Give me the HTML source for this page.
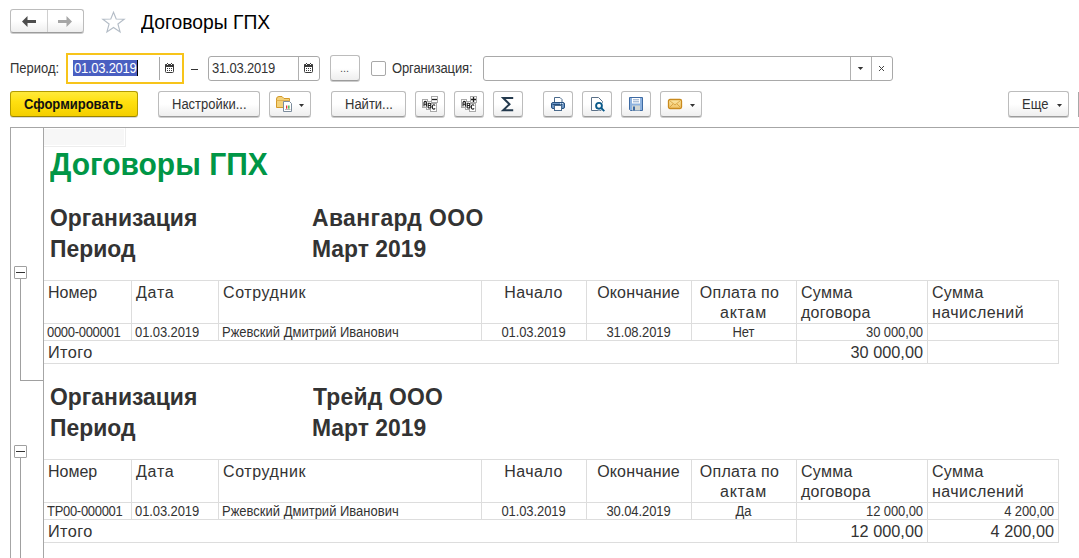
<!DOCTYPE html>
<html><head><meta charset="utf-8">
<style>
*{margin:0;padding:0;box-sizing:border-box}
html,body{width:1079px;height:558px;overflow:hidden;background:#fff;font-family:"Liberation Sans",sans-serif;color:#333}
.a{position:absolute}
.btn{position:absolute;border:1px solid #bcbcbc;border-bottom-color:#9c9c9c;border-radius:3px;background:linear-gradient(#fff 0%,#fff 50%,#eeeeee 100%);box-shadow:0 1px 0 rgba(0,0,0,.2)}
.t{position:absolute;white-space:nowrap;line-height:1}
.fld{position:absolute;border:1px solid #a9a9a9;border-radius:3px;background:#fff}
.f13{font-size:13px;color:#333;transform:scaleY(1.1);transform-origin:0 84.65%}
.rb{font-weight:bold;font-size:22.9px;color:#333;transform:scaleY(1.08);transform-origin:0 0}
.hd{font-size:16px;color:#333}
.tt{font-size:16.3px;color:#333}
.dt{font-size:13px;color:#333;transform:scaleY(1.1);transform-origin:0 84.65%}
</style></head><body>
<div class="btn" style="left:10px;top:9px;width:74px;height:24px;"></div>
<div class="a" style="left:47px;top:10px;width:1px;height:22px;background:#cfcfcf"></div>
<svg class="a" style="left:21px;top:15px" width="16" height="13" viewBox="0 0 16 13"><path d="M1 6.5 L6.5 1 L6.5 5 L15 5 L15 8 L6.5 8 L6.5 12 Z" fill="#4d4d4d"/></svg>
<svg class="a" style="left:57px;top:15px" width="16" height="13" viewBox="0 0 16 13"><path d="M15 6.5 L9.5 1 L9.5 5 L1 5 L1 8 L9.5 8 L9.5 12 Z" fill="#a6a6a6"/></svg>
<svg class="a" style="left:100px;top:9px" width="27" height="25" viewBox="0 0 27 25"><path d="M13.5 3.2 L16.2 10 L24.2 10.2 L17.9 15 L20.1 23 L13.5 18.5 L6.9 23 L9.1 15 L2.8 10.2 L10.8 10 Z" fill="none" stroke="#b3bcc6" stroke-width="1.1" stroke-linejoin="miter"/></svg>
<div class="t " style="left:141px;top:11.5px;font-size:19.3px;color:#000;transform:scaleY(1.05);transform-origin:0 0">Договоры ГПХ</div>
<div class="t f13" style="left:10px;top:62px;">Период:</div>
<div class="a" style="left:66px;top:53px;width:118px;height:31px;border:2px solid #f7c41a"></div>
<div class="a" style="left:159px;top:57px;width:1px;height:23px;background:#a8a8a8"></div>
<div class="a" style="left:73px;top:60px;width:64px;height:16px;background:#4a5fc1"></div>
<div class="a" style="left:137px;top:60px;width:1px;height:16px;background:#000"></div>
<div class="t f13" style="left:74px;top:62px;color:#fff;letter-spacing:-0.25px">01.03.2019</div>
<svg class="a" style="left:165px;top:63px" width="9" height="10" viewBox="0 0 9 10"><rect x="0.5" y="1.5" width="8" height="8" rx="1" fill="#fff" stroke="#3a3a3a"/><rect x="0" y="1" width="9" height="3" rx="1" fill="#3a3a3a"/><rect x="2" y="0" width="1" height="1" fill="#3a3a3a"/><rect x="6" y="0" width="1" height="1" fill="#3a3a3a"/><rect x="2" y="1" width="1" height="1" fill="#fff"/><rect x="6" y="1" width="1" height="1" fill="#fff"/><g fill="#3a3a3a"><rect x="2" y="5" width="1" height="1"/><rect x="4" y="5" width="1" height="1"/><rect x="6" y="5" width="1" height="1"/><rect x="2" y="7" width="1" height="1"/><rect x="4" y="7" width="1" height="1"/><rect x="6" y="7" width="1" height="1"/></g></svg>
<div class="a" style="left:191px;top:69px;width:7px;height:1px;background:#333"></div>
<div class="fld" style="left:208px;top:56px;width:112px;height:25px"></div>
<div class="a" style="left:298px;top:57px;width:1px;height:23px;background:#b0b0b0"></div>
<div class="t f13" style="left:212px;top:62px;letter-spacing:-0.2px">31.03.2019</div>
<svg class="a" style="left:304px;top:63px" width="9" height="10" viewBox="0 0 9 10"><rect x="0.5" y="1.5" width="8" height="8" rx="1" fill="#fff" stroke="#3a3a3a"/><rect x="0" y="1" width="9" height="3" rx="1" fill="#3a3a3a"/><rect x="2" y="0" width="1" height="1" fill="#3a3a3a"/><rect x="6" y="0" width="1" height="1" fill="#3a3a3a"/><rect x="2" y="1" width="1" height="1" fill="#fff"/><rect x="6" y="1" width="1" height="1" fill="#fff"/><g fill="#3a3a3a"><rect x="2" y="5" width="1" height="1"/><rect x="4" y="5" width="1" height="1"/><rect x="6" y="5" width="1" height="1"/><rect x="2" y="7" width="1" height="1"/><rect x="4" y="7" width="1" height="1"/><rect x="6" y="7" width="1" height="1"/></g></svg>
<div class="btn" style="left:330px;top:55px;width:30px;height:26px;"></div>
<div class="t " style="left:340px;top:63px;font-size:11px;color:#555">...</div>
<div class="a" style="left:371px;top:61px;width:15px;height:15px;border:1px solid #a8a8a8;border-radius:2px;background:#fff"></div>
<div class="t f13" style="left:392px;top:62px;letter-spacing:-0.13px">Организация:</div>
<div class="fld" style="left:483px;top:56px;width:410px;height:25px"></div>
<div class="a" style="left:850px;top:57px;width:1px;height:23px;background:#b0b0b0"></div>
<div class="a" style="left:871px;top:57px;width:1px;height:23px;background:#b0b0b0"></div>
<svg class="a" style="left:857px;top:67px" width="7" height="4" viewBox="0 0 7 4"><path d="M0.8 0h5.4L3.5 3z" fill="#333"/></svg>
<svg class="a" style="left:878px;top:65px" width="7" height="7" viewBox="0 0 7 7"><path d="M1 1L6 6M6 1L1 6" stroke="#444" stroke-width="1"/></svg>
<div class="a" style="left:10px;top:91px;width:128px;height:26px;border:1px solid #b39c00;border-bottom-color:#9a8400;border-radius:3px;background:linear-gradient(#ffea3c 0%,#ffe010 40%,#f4cf00 100%);box-shadow:0 1px 0 rgba(0,0,0,.15)"></div>
<div class="t f13" style="left:24px;top:98px;font-weight:bold;color:#111">Сформировать</div>
<div class="btn" style="left:158px;top:91px;width:102px;height:26px;"></div>
<div class="t f13" style="left:172px;top:98px;">Настройки...</div>
<div class="btn" style="left:269px;top:91px;width:42px;height:26px;"></div>
<svg class="a" style="left:275px;top:95px" width="20" height="18" viewBox="0 0 20 18"><path d="M1.5 4 Q1.5 1.5 4 1.5 L7 1.5 L9 3.5 L14.5 3.5 L14.5 12.5 L1.5 12.5 Z" fill="#f4d27a" stroke="#d49a2a" stroke-width="1"/><path d="M1.5 5.5 H14.5" stroke="#e0b050" stroke-width="1"/><path d="M8.5 6.5 H14.5 L16.5 8.5 V16.5 H8.5 Z" fill="#fff" stroke="#7c8c9c" stroke-width="1"/><rect x="11" y="10.5" width="1.3" height="3.2" fill="#e83030"/><rect x="13.2" y="10.5" width="1.3" height="3.2" fill="#30b040"/><path d="M10 14.5H15.5" stroke="#888" stroke-width="0.6"/></svg>
<svg class="a" style="left:299px;top:104px" width="6" height="4" viewBox="0 0 6 4"><path d="M0 0h5L2.5 3z" fill="#333"/></svg>
<div class="btn" style="left:331px;top:91px;width:75px;height:26px;"></div>
<div class="t f13" style="left:345px;top:98px;">Найти...</div>
<div class="btn" style="left:415px;top:91px;width:30px;height:26px;"></div>
<div class="btn" style="left:454px;top:91px;width:30px;height:26px;"></div>
<div class="btn" style="left:493px;top:91px;width:30px;height:26px;"></div>
<svg class="a" style="left:415px;top:91px" width="30" height="26" viewBox="0 0 30 26"><rect x="7.5" y="8.5" width="5" height="8" fill="#fff" stroke="#a8a8a8"/><rect x="11.5" y="10.5" width="5" height="8" fill="#fff" stroke="#a8a8a8"/><rect x="15.5" y="12.5" width="6" height="8" fill="#fff" stroke="#a8a8a8"/><path d="M9 15.5V11.5Q10.2 9.3 11.4 11.5V15.5M9 13.3H11.4" fill="none" stroke="#1e1e1e" stroke-width="1.1"/><path d="M13.2 17V12.2H14.6Q15.9 12.2 15.9 13.4Q15.9 14.5 14.6 14.5H13.2M14.6 14.5Q16.1 14.5 16.1 15.7Q16.1 17 14.6 17H13.2" fill="none" stroke="#1e1e1e" stroke-width="1.1"/><path d="M20 14.6Q19.6 13.7 18.7 13.7Q17.3 13.7 17.3 15.9Q17.3 18.1 18.7 18.1Q19.6 18.1 20 17.2" fill="none" stroke="#1e1e1e" stroke-width="1.1"/><rect x="16.5" y="5.5" width="6" height="6" fill="#fff" stroke="#a8a8a8"/><path d="M17 8.5h5" stroke="#1e1e1e" stroke-width="1.3"/></svg>
<svg class="a" style="left:454px;top:91px" width="30" height="26" viewBox="0 0 30 26"><rect x="7.5" y="8.5" width="5" height="8" fill="#fff" stroke="#a8a8a8"/><rect x="11.5" y="10.5" width="5" height="8" fill="#fff" stroke="#a8a8a8"/><rect x="15.5" y="12.5" width="6" height="8" fill="#fff" stroke="#a8a8a8"/><path d="M9 15.5V11.5Q10.2 9.3 11.4 11.5V15.5M9 13.3H11.4" fill="none" stroke="#1e1e1e" stroke-width="1.1"/><path d="M13.2 17V12.2H14.6Q15.9 12.2 15.9 13.4Q15.9 14.5 14.6 14.5H13.2M14.6 14.5Q16.1 14.5 16.1 15.7Q16.1 17 14.6 17H13.2" fill="none" stroke="#1e1e1e" stroke-width="1.1"/><path d="M20 14.6Q19.6 13.7 18.7 13.7Q17.3 13.7 17.3 15.9Q17.3 18.1 18.7 18.1Q19.6 18.1 20 17.2" fill="none" stroke="#1e1e1e" stroke-width="1.1"/><rect x="16.5" y="5.5" width="6" height="6" fill="#fff" stroke="#a8a8a8"/><path d="M17 8.5h5M19.5 6v5" stroke="#1e1e1e" stroke-width="1.3"/></svg>
<svg class="a" style="left:493px;top:91px" width="30" height="26" viewBox="0 0 30 26"><path d="M20.2 7H10.2L16.5 13.2L10.2 19.2H20.2" fill="none" stroke="#243a4e" stroke-width="2" stroke-linejoin="miter"/></svg>
<div class="btn" style="left:543px;top:91px;width:30px;height:26px;"></div>
<div class="btn" style="left:582px;top:91px;width:30px;height:26px;"></div>
<div class="btn" style="left:621px;top:91px;width:30px;height:26px;"></div>
<svg class="a" style="left:543px;top:91px" width="30" height="26" viewBox="0 0 30 26"><path d="M11.5 6.5H17L19 8.5V12H11.5Z" fill="#fff" stroke="#4a6a8c"/><rect x="8.5" y="11.5" width="13" height="6" rx="1.5" fill="#6f97c6" stroke="#25507f"/><path d="M9.5 13.5H20" stroke="#25507f"/><rect x="11.5" y="14.5" width="7" height="5" fill="#fff" stroke="#4a6a8c"/><rect x="17" y="12.3" width="1" height="1" fill="#fff"/><rect x="19" y="12.3" width="1" height="1" fill="#fff"/></svg>
<svg class="a" style="left:582px;top:91px" width="30" height="26" viewBox="0 0 30 26"><path d="M9.5 6.5H16.5L20.5 10.5V19.5H9.5Z" fill="#fff" stroke="#5a7088"/><circle cx="17" cy="14.8" r="4.6" fill="#fff"/><path d="M19.2 17L22.3 20.1" stroke="#fff" stroke-width="3.5"/><circle cx="17" cy="14.8" r="2.9" fill="#fff" stroke="#0a5a8a" stroke-width="1.9"/><path d="M19.2 17L22.3 20.1" stroke="#0a5a8a" stroke-width="2"/></svg>
<svg class="a" style="left:621px;top:91px" width="30" height="26" viewBox="0 0 30 26"><path d="M8.5 6.5H21.5V19.5H9.5L8.5 18.5Z" fill="#8db2df" stroke="#3d6aa3"/><rect x="11" y="7" width="8" height="5.5" fill="#fff"/><path d="M12 8.8H18M12 10.8H18" stroke="#8aa6c8" stroke-width="1"/><rect x="11" y="14.5" width="8" height="5" fill="#d2d6d2"/><rect x="12" y="15.5" width="2" height="4" fill="#3d6aa3"/></svg>
<div class="btn" style="left:660px;top:91px;width:42px;height:26px;"></div>
<svg class="a" style="left:660px;top:91px" width="42" height="26" viewBox="0 0 42 26"><defs><linearGradient id="eg" x1="0" y1="0" x2="0" y2="1"><stop offset="0" stop-color="#fde9a8"/><stop offset="1" stop-color="#f0c264"/></linearGradient></defs><rect x="8.5" y="8.5" width="13" height="9" rx="1.5" fill="url(#eg)" stroke="#c98a1e" stroke-width="1.3"/><path d="M9.5 9.5L15 14L20.5 9.5M9.5 16.5L13 13M20.5 16.5L17 13" fill="none" stroke="#d39a36" stroke-width="0.8"/></svg>
<svg class="a" style="left:690px;top:104px" width="6" height="4" viewBox="0 0 6 4"><path d="M0 0h5L2.5 3z" fill="#333"/></svg>
<div class="btn" style="left:1008px;top:91px;width:61px;height:26px;"></div>
<div class="t f13" style="left:1022px;top:98px;">Еще</div>
<svg class="a" style="left:1057px;top:104px" width="6" height="4" viewBox="0 0 6 4"><path d="M0 0h5L2.5 3z" fill="#333"/></svg>
<div class="a" style="left:1078px;top:92px;width:1px;height:25px;background:#a8a8a8"></div>
<div class="a" style="left:10px;top:127px;width:1069px;height:1px;background:#a6a6a6"></div>
<div class="a" style="left:10px;top:127px;width:1px;height:431px;background:#a6a6a6"></div>
<div class="a" style="left:43px;top:128px;width:1px;height:430px;background:#a6a6a6"></div>
<div class="a" style="left:44px;top:128px;width:82px;height:19px;background:#ededed"></div>
<div class="a" style="left:44px;top:128px;width:81px;height:18px;background:#fff"></div>
<div class="a" style="left:44px;top:129px;width:80px;height:16px;background:#f7f7f7"></div>
<div class="t " style="left:50px;top:148.8px;font-size:30px;font-weight:bold;color:#009646;transform:scaleY(1.052);transform-origin:0 0">Договоры ГПХ</div>
<div class="t rb" style="left:50px;top:204.5px;">Организация</div>
<div class="t rb" style="left:312px;top:204.5px;letter-spacing:0.4px">Авангард ООО</div>
<div class="t rb" style="left:50px;top:235.5px;">Период</div>
<div class="t rb" style="left:312px;top:235.5px;">Март 2019</div>
<div class="a" style="left:44px;top:280px;width:1015px;height:1px;background:#dddddd"></div>
<div class="a" style="left:44px;top:323px;width:1015px;height:1px;background:#dddddd"></div>
<div class="a" style="left:44px;top:340px;width:1015px;height:1px;background:#dddddd"></div>
<div class="a" style="left:44px;top:363px;width:1015px;height:1px;background:#dddddd"></div>
<div class="a" style="left:131px;top:280px;width:1px;height:61px;background:#dddddd"></div>
<div class="a" style="left:218px;top:280px;width:1px;height:61px;background:#dddddd"></div>
<div class="a" style="left:481px;top:280px;width:1px;height:61px;background:#dddddd"></div>
<div class="a" style="left:586px;top:280px;width:1px;height:61px;background:#dddddd"></div>
<div class="a" style="left:691px;top:280px;width:1px;height:61px;background:#dddddd"></div>
<div class="a" style="left:796px;top:280px;width:1px;height:61px;background:#dddddd"></div>
<div class="a" style="left:927px;top:280px;width:1px;height:61px;background:#dddddd"></div>
<div class="a" style="left:1058px;top:280px;width:1px;height:61px;background:#dddddd"></div>
<div class="a" style="left:796px;top:340px;width:1px;height:24px;background:#dddddd"></div>
<div class="a" style="left:927px;top:340px;width:1px;height:24px;background:#dddddd"></div>
<div class="a" style="left:1058px;top:340px;width:1px;height:24px;background:#dddddd"></div>
<div class="t hd" style="left:48px;top:285px;">Номер</div>
<div class="t hd" style="left:136px;top:285px;letter-spacing:0.75px">Дата</div>
<div class="t hd" style="left:223px;top:285px;letter-spacing:0.6px">Сотрудник</div>
<div class="t hd" style="left:481px;top:285px;width:105px;text-align:center;letter-spacing:0.5px">Начало</div>
<div class="t hd" style="left:586px;top:285px;width:105px;text-align:center;letter-spacing:0.15px">Окончание</div>
<div class="t hd" style="left:687px;top:285px;width:105px;text-align:center;letter-spacing:0.26px">Оплата по</div>
<div class="t hd" style="left:691px;top:305px;width:105px;text-align:center;letter-spacing:0.8px">актам</div>
<div class="t hd" style="left:801px;top:285px;letter-spacing:0.3px">Сумма</div>
<div class="t hd" style="left:801px;top:305px;letter-spacing:0.25px">договора</div>
<div class="t hd" style="left:932px;top:285px;letter-spacing:0.3px">Сумма</div>
<div class="t hd" style="left:932px;top:305px;letter-spacing:0.45px">начислений</div>
<div class="t dt" style="left:47px;top:326px;letter-spacing:-0.3px">0000-000001</div>
<div class="t dt" style="left:135px;top:326px;letter-spacing:-0.1px">01.03.2019</div>
<div class="t dt" style="left:222px;top:326px;">Ржевский Дмитрий Иванович</div>
<div class="t dt" style="left:481px;top:326px;width:105px;text-align:center;letter-spacing:-0.1px">01.03.2019</div>
<div class="t dt" style="left:586px;top:326px;width:105px;text-align:center;letter-spacing:-0.1px">31.08.2019</div>
<div class="t dt" style="left:691px;top:326px;width:105px;text-align:center;">Нет</div>
<div class="t dt" style="right:156px;top:326px;letter-spacing:-0.1px">30 000,00</div>
<div class="t tt" style="left:48px;top:344px;letter-spacing:0.4px">Итого</div>
<div class="t tt" style="right:156px;top:344px;">30 000,00</div>
<div class="t rb" style="left:50px;top:383.5px;">Организация</div>
<div class="t rb" style="left:313px;top:383.5px;letter-spacing:0.2px">Трейд ООО</div>
<div class="t rb" style="left:50px;top:414.5px;">Период</div>
<div class="t rb" style="left:312px;top:414.5px;">Март 2019</div>
<div class="a" style="left:44px;top:459px;width:1015px;height:1px;background:#dddddd"></div>
<div class="a" style="left:44px;top:502px;width:1015px;height:1px;background:#dddddd"></div>
<div class="a" style="left:44px;top:519px;width:1015px;height:1px;background:#dddddd"></div>
<div class="a" style="left:44px;top:542px;width:1015px;height:1px;background:#dddddd"></div>
<div class="a" style="left:131px;top:459px;width:1px;height:61px;background:#dddddd"></div>
<div class="a" style="left:218px;top:459px;width:1px;height:61px;background:#dddddd"></div>
<div class="a" style="left:481px;top:459px;width:1px;height:61px;background:#dddddd"></div>
<div class="a" style="left:586px;top:459px;width:1px;height:61px;background:#dddddd"></div>
<div class="a" style="left:691px;top:459px;width:1px;height:61px;background:#dddddd"></div>
<div class="a" style="left:796px;top:459px;width:1px;height:61px;background:#dddddd"></div>
<div class="a" style="left:927px;top:459px;width:1px;height:61px;background:#dddddd"></div>
<div class="a" style="left:1058px;top:459px;width:1px;height:61px;background:#dddddd"></div>
<div class="a" style="left:796px;top:519px;width:1px;height:24px;background:#dddddd"></div>
<div class="a" style="left:927px;top:519px;width:1px;height:24px;background:#dddddd"></div>
<div class="a" style="left:1058px;top:519px;width:1px;height:24px;background:#dddddd"></div>
<div class="t hd" style="left:48px;top:464px;">Номер</div>
<div class="t hd" style="left:136px;top:464px;letter-spacing:0.75px">Дата</div>
<div class="t hd" style="left:223px;top:464px;letter-spacing:0.6px">Сотрудник</div>
<div class="t hd" style="left:481px;top:464px;width:105px;text-align:center;letter-spacing:0.5px">Начало</div>
<div class="t hd" style="left:586px;top:464px;width:105px;text-align:center;letter-spacing:0.15px">Окончание</div>
<div class="t hd" style="left:687px;top:464px;width:105px;text-align:center;letter-spacing:0.26px">Оплата по</div>
<div class="t hd" style="left:691px;top:484px;width:105px;text-align:center;letter-spacing:0.8px">актам</div>
<div class="t hd" style="left:801px;top:464px;letter-spacing:0.3px">Сумма</div>
<div class="t hd" style="left:801px;top:484px;letter-spacing:0.25px">договора</div>
<div class="t hd" style="left:932px;top:464px;letter-spacing:0.3px">Сумма</div>
<div class="t hd" style="left:932px;top:484px;letter-spacing:0.45px">начислений</div>
<div class="t dt" style="left:47px;top:505px;letter-spacing:-0.3px">ТР00-000001</div>
<div class="t dt" style="left:135px;top:505px;letter-spacing:-0.1px">01.03.2019</div>
<div class="t dt" style="left:222px;top:505px;">Ржевский Дмитрий Иванович</div>
<div class="t dt" style="left:481px;top:505px;width:105px;text-align:center;letter-spacing:-0.1px">01.03.2019</div>
<div class="t dt" style="left:586px;top:505px;width:105px;text-align:center;letter-spacing:-0.1px">30.04.2019</div>
<div class="t dt" style="left:691px;top:505px;width:105px;text-align:center;">Да</div>
<div class="t dt" style="right:156px;top:505px;letter-spacing:-0.1px">12 000,00</div>
<div class="t dt" style="right:25px;top:505px;letter-spacing:-0.1px">4 200,00</div>
<div class="t tt" style="left:48px;top:523px;letter-spacing:0.4px">Итого</div>
<div class="t tt" style="right:156px;top:523px;">12 000,00</div>
<div class="t tt" style="right:25px;top:523px;">4 200,00</div>
<div class="a" style="left:14px;top:266px;width:13px;height:13px;border:1px solid #a0a0a0;border-radius:1px;background:#fff"></div>
<div class="a" style="left:16px;top:272px;width:9px;height:1px;background:#333"></div>
<div class="a" style="left:20px;top:279px;width:1px;height:102px;background:#a0a0a0"></div>
<div class="a" style="left:20px;top:380px;width:23px;height:1px;background:#a0a0a0"></div>
<div class="a" style="left:14px;top:445px;width:13px;height:13px;border:1px solid #a0a0a0;border-radius:1px;background:#fff"></div>
<div class="a" style="left:16px;top:451px;width:9px;height:1px;background:#333"></div>
<div class="a" style="left:20px;top:458px;width:1px;height:100px;background:#a0a0a0"></div>
</body></html>
